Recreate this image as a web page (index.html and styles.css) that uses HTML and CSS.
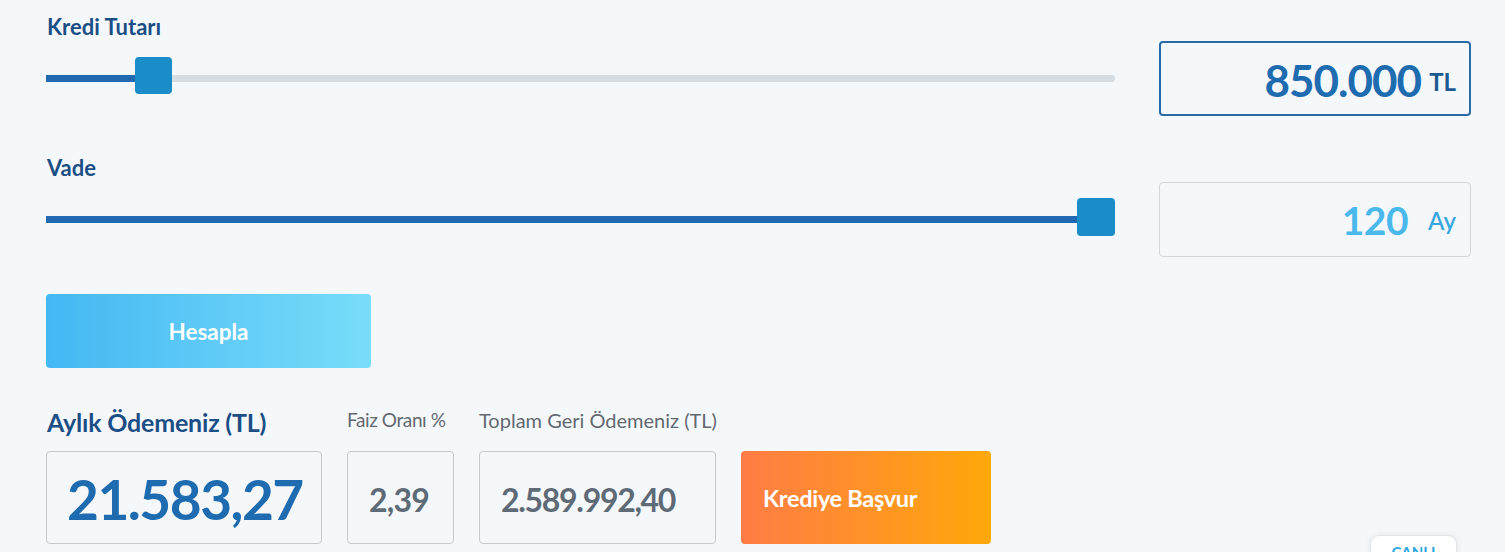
FILE: index.html
```html
<!DOCTYPE html>
<html lang="tr">
<head>
<meta charset="utf-8">
<title>Kredi Hesaplama</title>
<link rel="stylesheet" href="styles.css">
</head>
<body>
<main class="calc">
  <section class="field">
    <div class="field-label">Kredi Tutarı</div>
    <div class="field-row">
      <div class="slider">
        <div class="track">
          <div class="fill" style="width: 8.4%"></div>
          <div class="thumb" style="left: 8.3%"></div>
        </div>
      </div>
      <div class="value-box value-box--active">
        <span class="value-num">850.000</span>
        <span class="value-unit">TL</span>
      </div>
    </div>
  </section>

  <section class="field">
    <div class="field-label">Vade</div>
    <div class="field-row">
      <div class="slider">
        <div class="track">
          <div class="fill" style="width: 100%"></div>
          <div class="thumb thumb--end" style="left: 96.44%"></div>
        </div>
      </div>
      <div class="value-box value-box--term">
        <span class="value-num value-num--light">120</span>
        <span class="value-unit value-unit--light">Ay</span>
      </div>
    </div>
  </section>

  <button class="btn-calc">Hesapla</button>

  <section class="results">
    <div class="result result--main">
      <div class="result-label result-label--main">Aylık Ödemeniz (TL)</div>
      <div class="result-box result-box--main">21.583,27</div>
    </div>
    <div class="result result--rate">
      <div class="result-label result-label--rate">Faiz Oranı %</div>
      <div class="result-box">2,39</div>
    </div>
    <div class="result result--total">
      <div class="result-label">Toplam Geri Ödemeniz (TL)</div>
      <div class="result-box result-box--total">2.589.992,40</div>
    </div>
    <div class="result result--apply">
      <div class="result-label"></div>
      <button class="btn-apply">Krediye Başvur</button>
    </div>
  </section>
</main>
<div class="live-chip">CANLI</div>
</body>
</html>
```

FILE: styles.css
```css
* { box-sizing: border-box; }
html, body {
  margin: 0;
  padding: 0;
  background: #f5f8fb;
  overflow: hidden;
}
body {
  font-family: "Lato", "Liberation Sans", sans-serif;
  width: 1505px;
  height: 552px;
  position: relative;
}
.calc {
  padding: 14px 34px 0 46px;
}
.field {
  margin-bottom: 39px;
}
.field + .field {
  margin-bottom: 37px;
}
.field-label {
  height: 27px;
  font-size: 22px;
  font-weight: 700;
  color: #1c4e86;
  padding-left: 1px;
  line-height: 25px;
  letter-spacing: 0;
}
.field-row {
  display: flex;
  gap: 44px;
  height: 75px;
}
.slider {
  width: 1069px;
  display: flex;
  align-items: center;
}
.track {
  position: relative;
  width: 100%;
  height: 7px;
  background: #d5dce2;
  border-radius: 0 4px 4px 0;
}
.fill {
  height: 100%;
  background: #2169b0;
}
.thumb {
  position: absolute;
  top: -18px;
  width: 37px;
  height: 37px;
  background: #1a8cc7;
  border-radius: 4px;
}
.thumb--end {
  width: 38px;
  height: 38px;
}
.value-box {
  width: 312px;
  height: 75px;
  border: 1px solid #d2d7dc;
  border-radius: 4px;
  display: flex;
  align-items: center;
  justify-content: flex-end;
  padding-right: 14px;
  background: #f5f8fb;
}
.value-box--active {
  border: 2px solid #2b6ba5;
  padding-right: 13px;
}
.value-num {
  font-size: 44px;
  font-weight: 700;
  color: #1f6bb0;
  letter-spacing: -1px;
  margin-top: 2px;
}
.value-unit {
  font-size: 24px;
  font-weight: 700;
  color: #1d5a91;
  margin-left: 8px;
  margin-top: 6px;
}
.value-num--light {
  font-size: 39px;
  color: #4bb8ec;
  letter-spacing: -0.5px;
  margin-top: 0;
}
.value-unit--light {
  color: #3ba7e1;
  margin-left: 20px;
  margin-top: 2px;
  font-weight: 600;
}
.btn-calc {
  display: flex;
  align-items: center;
  justify-content: center;
  width: 325px;
  height: 74px;
  border: 0;
  border-radius: 4px;
  background: linear-gradient(90deg, #43b8f3 0%, #79dcf9 100%);
  color: #ffffff;
  font-family: inherit;
  font-size: 22.5px;
  font-weight: 700;
  padding: 0;
}
.results {
  display: flex;
  gap: 25px;
  margin-top: 38px;
}
.result {
  display: flex;
  flex-direction: column;
}
.result--main { width: 276px; }
.result--rate { width: 107px; }
.result--total { width: 237px; }
.result--apply { width: 250px; }
.result-label {
  height: 45px;
  font-size: 20px;
  font-weight: 400;
  color: #63696f;
  line-height: 24px;
  padding-top: 1.5px;
  white-space: nowrap;
}
.result-label--rate {
  font-size: 19px;
  letter-spacing: -0.4px;
}
.result-label--main {
  font-size: 25px;
  font-weight: 700;
  color: #1c4e86;
  line-height: 30px;
  padding-top: 1px;
  padding-left: 1px;
  letter-spacing: -0.2px;
}
.result-box {
  width: 100%;
  height: 93px;
  border: 1px solid #c6cacf;
  border-radius: 4px;
  display: flex;
  align-items: center;
  justify-content: flex-start;
  padding: 3px 0 0 21px;
  font-size: 32px;
  font-weight: 700;
  color: #5e6b76;
  letter-spacing: -0.8px;
}
.result-box--total {
  letter-spacing: -1.3px;
}
.result-box--main {
  font-size: 55px;
  color: #1f6bb0;
  letter-spacing: -1.5px;
  padding: 2px 0 0 20px;
}
.btn-apply {
  width: 250px;
  height: 93px;
  border: 0;
  border-radius: 4px;
  background: linear-gradient(90deg, #ff7c45 0%, #ffa80a 100%);
  color: #ffffff;
  font-family: inherit;
  font-size: 23.5px;
  font-weight: 700;
  letter-spacing: -0.3px;
  text-align: left;
  padding: 0 0 0 22px;
}
.live-chip {
  position: absolute;
  left: 1370px;
  top: 535px;
  width: 87px;
  height: 40px;
  background: #ffffff;
  border: 1px solid #e2e6ea;
  border-radius: 9px;
  box-shadow: 0 0 6px rgba(0, 0, 0, 0.08);
  color: #2aa6de;
  font-size: 15px;
  font-weight: 700;
  text-align: center;
  padding-top: 7px;
}
```
